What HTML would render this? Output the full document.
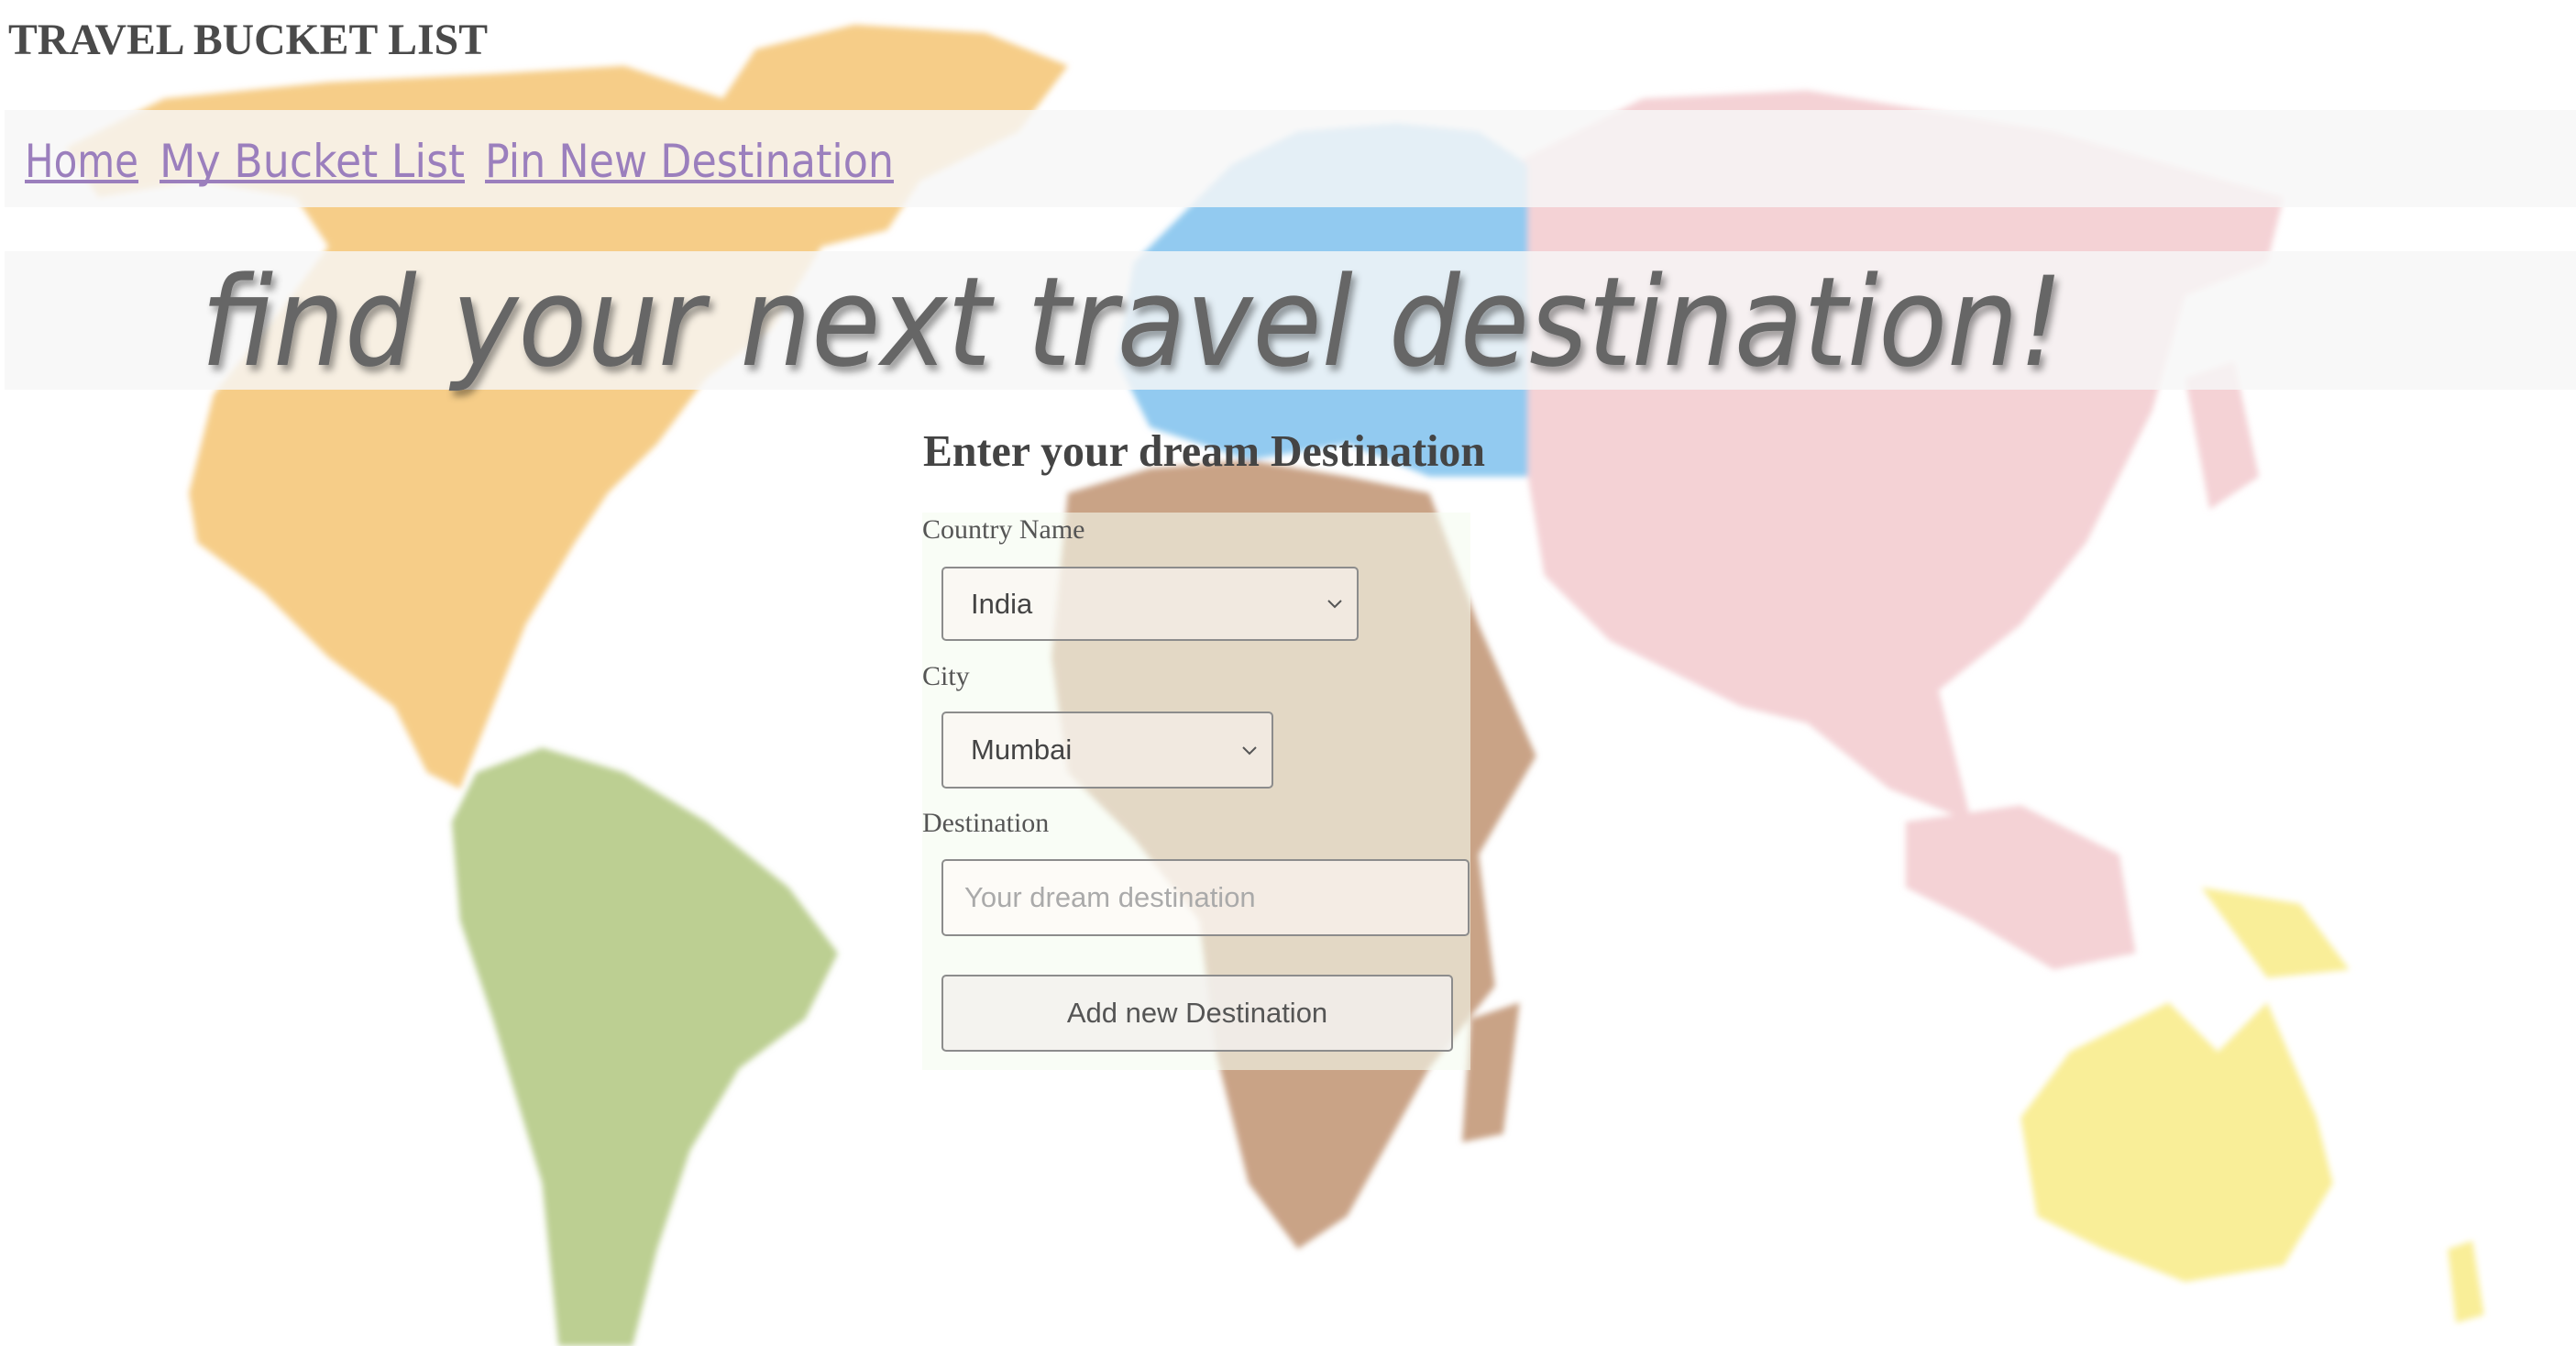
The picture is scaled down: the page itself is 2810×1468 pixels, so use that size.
<!DOCTYPE html>
<html><head><meta charset="utf-8"><style>
body{margin:0;width:2810px;height:1468px;overflow:hidden;background:#fff;position:relative;font-family:"Liberation Serif",serif}
.abs{position:absolute}
.band{position:absolute;left:5px;width:2805px;background:rgba(247,247,247,0.82)}
.lbl{position:absolute;left:1006px;font-size:30px;color:#555}
.box{position:absolute;left:1027px;border:2px solid #8c8c8c;border-radius:5px;box-sizing:border-box;background:rgba(250,245,242,0.6);font-family:"Liberation Sans",sans-serif;font-size:31px;color:#444}
.chev{position:absolute;right:16px;top:34px}
</style></head><body>
<svg class="abs" style="left:0;top:0" width="2810" height="1468" viewBox="0 0 1568 819" preserveAspectRatio="none">
<defs><filter id="b"><feGaussianBlur stdDeviation="2"/></filter></defs>
<g filter="url(#b)">
<polygon fill="#f6cd88" points="115,300 130,240 170,190 200,150 180,120 120,110 60,120 40,90 100,60 200,50 300,45 380,40 440,60 460,30 520,15 600,20 650,40 620,80 560,110 540,140 500,150 470,200 430,230 400,270 370,300 350,330 320,380 300,430 280,480 260,470 240,430 200,400 160,360 120,330"/>
<polygon fill="#bccf92" points="290,470 330,455 380,470 430,500 480,540 510,580 490,620 450,650 420,700 400,760 385,819 340,819 330,720 300,620 280,560 275,500"/>
<polygon fill="#c9a386" points="650,300 700,285 760,280 820,290 870,300 900,380 935,460 900,520 910,600 870,650 820,740 790,760 760,720 740,640 730,560 690,510 650,470 640,400"/>
<polygon fill="#c9a386" points="895,620 925,610 915,690 890,695"/>
<polygon fill="#f4d2d5" points="920,100 1000,60 1100,55 1250,80 1390,120 1380,160 1330,180 1310,250 1270,330 1230,380 1180,420 1200,500 1150,480 1100,440 1060,430 1020,410 980,390 940,350 930,290 920,200"/>
<polygon fill="#f4d2d5" points="1160,500 1230,490 1290,520 1300,580 1250,590 1200,560 1160,540"/>
<polygon fill="#f4d2d5" points="1330,230 1360,220 1375,290 1345,310"/>
<polygon fill="#92caf0" points="690,160 720,130 750,100 790,80 850,75 900,80 930,100 930,290 870,290 820,270 760,280 700,260 680,220"/>
<polygon fill="#f9ee98" points="1230,680 1260,640 1320,610 1350,640 1380,610 1410,680 1420,720 1390,770 1330,780 1280,760 1240,740"/>
<polygon fill="#f9ee98" points="1340,540 1400,550 1430,590 1380,595"/>
<polygon fill="#f9ee98" points="1490,760 1505,755 1512,800 1495,805"/>
</g>
</svg>
<div class="band" style="top:120px;height:106px"></div>
<div class="band" style="top:274px;height:151px"></div>
<svg class="abs" style="left:0;top:0" width="2810" height="560">
<defs><filter id="s" x="-5%" y="-20%" width="110%" height="150%"><feDropShadow dx="4" dy="6" stdDeviation="4" flood-color="#000" flood-opacity="0.4"/></filter></defs>
<text x="9" y="59" textLength="523" lengthAdjust="spacingAndGlyphs" font-family="Liberation Serif" font-weight="bold" font-size="48" fill="#4a4a4a">TRAVEL BUCKET LIST</text>
<g font-family="Comic Sans MS, DejaVu Sans, sans-serif" font-size="50" fill="#9b7fbd">
<text x="27" y="193" textLength="124" lengthAdjust="spacingAndGlyphs">Home</text>
<text x="174" y="193" textLength="333" lengthAdjust="spacingAndGlyphs">My Bucket List</text>
<text x="529" y="193" textLength="446" lengthAdjust="spacingAndGlyphs">Pin New Destination</text>
</g>
<g fill="#9b7fbd"><rect x="27" y="196" width="124" height="4"/><rect x="174" y="196" width="333" height="4"/><rect x="529" y="196" width="446" height="4"/></g>
<text x="219" y="398" textLength="2032" lengthAdjust="spacingAndGlyphs" font-family="DejaVu Sans" font-style="italic" font-size="135" fill="#666" filter="url(#s)">find your next travel destination!</text>
<text x="1007" y="508" textLength="613" lengthAdjust="spacingAndGlyphs" font-family="Liberation Serif" font-weight="bold" font-size="49" fill="#444">Enter your dream Destination</text>
</svg>
<div class="abs" style="left:1006px;top:559px;width:598px;height:608px;background:rgba(245,252,240,0.6)"></div>
<div class="lbl" style="top:561px">Country Name</div>
<div class="box" style="top:618px;width:455px;height:81px;line-height:77px;padding-left:30px">India<svg class="chev" width="16" height="10" viewBox="0 0 16 10"><path d="M1 1 L8 8 L15 1" fill="none" stroke="#555" stroke-width="2"/></svg></div>
<div class="lbl" style="top:721px">City</div>
<div class="box" style="top:776px;width:362px;height:84px;line-height:80px;padding-left:30px">Mumbai<svg class="chev" width="16" height="10" viewBox="0 0 16 10" style="top:36px"><path d="M1 1 L8 8 L15 1" fill="none" stroke="#555" stroke-width="2"/></svg></div>
<div class="lbl" style="top:881px">Destination</div>
<div class="box" style="top:937px;width:576px;height:84px;line-height:80px;padding-left:23px;color:#aaa;background:rgba(255,250,248,0.6)">Your dream destination</div>
<div class="box" style="top:1063px;width:558px;height:84px;line-height:80px;text-align:center;background:rgba(242,240,238,0.8);color:#555">Add new Destination</div>
</body></html>
